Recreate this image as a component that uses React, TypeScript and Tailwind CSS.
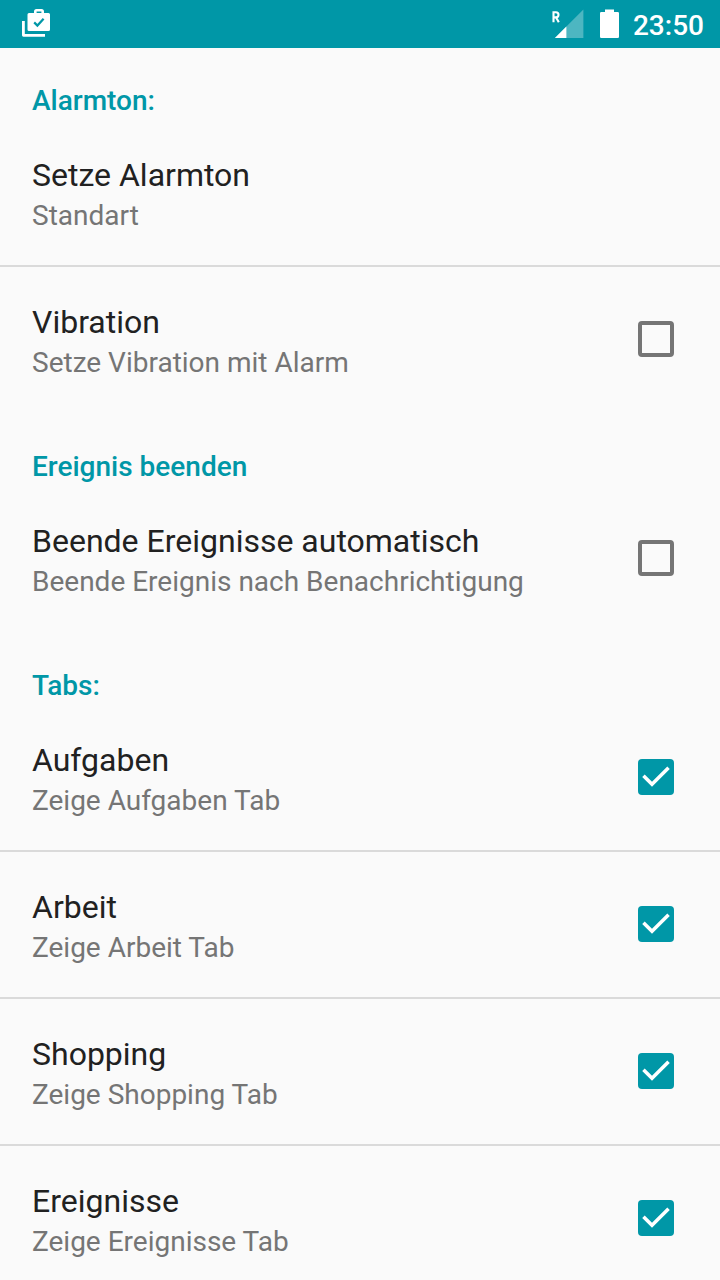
import { useState } from "react"

interface Preference {
  title: string
  summary: string
  checked?: boolean
}

interface Section {
  header: string
  items: Preference[]
}

const SECTIONS: Section[] = [
  {
    header: "Alarmton:",
    items: [
      { title: "Setze Alarmton", summary: "Standart" },
      { title: "Vibration", summary: "Setze Vibration mit Alarm", checked: false },
    ],
  },
  {
    header: "Ereignis beenden",
    items: [
      {
        title: "Beende Ereignisse automatisch",
        summary: "Beende Ereignis nach Benachrichtigung",
        checked: false,
      },
    ],
  },
  {
    header: "Tabs:",
    items: [
      { title: "Aufgaben", summary: "Zeige Aufgaben Tab", checked: true },
      { title: "Arbeit", summary: "Zeige Arbeit Tab", checked: true },
      { title: "Shopping", summary: "Zeige Shopping Tab", checked: true },
      { title: "Ereignisse", summary: "Zeige Ereignisse Tab", checked: true },
    ],
  },
]

function StatusBar() {
  return (
    <header className="flex h-12 shrink-0 items-center justify-between bg-[#0097a7] pl-5 pr-4 text-white">
      {/* briefcase with check mark, stacked on a second sheet */}
      <svg width="32" height="48" viewBox="0 0 32 48" fill="none">
        <path d="M3.4 21v14.3H25" stroke="currentColor" strokeWidth="2.8" strokeLinejoin="round" />
        <path
          fillRule="evenodd"
          fill="currentColor"
          d="M14 13v-1.5a2.5 2.5 0 0 1 2.5-2.5h5a2.5 2.5 0 0 1 2.5 2.5V13h4.5a1.5 1.5 0 0 1 1.5 1.500v15a1.500 1.500 0 0 1-1.500 1.500H9a1.500 1.500 0 0 1-1.500-1.500v-15A1.500 1.500 0 0 1 9 13ZM16.600 13h4.800v-1.600h-4.800Z"
        />
        <path d="m14.200 22.400 3.200 3.200 6.200-6.800" stroke="#0097a7" strokeWidth="2.200" />
      </svg>
      <div className="flex items-center">
        <svg width="36" height="48" viewBox="0 0 36 48">
          <path d="M31.400 9.500V38H2.900Z" fill="currentColor" fillOpacity="0.3" />
          <path d="M14.400 26.500v11.500H2.900Z" fill="currentColor" />
          <path
            d="M1.500 22.200v-10h2.400a2.600 2.600 0 0 1 0 5.200H1.500M4.100 17.400l2.700 4.800"
            fill="none"
            stroke="currentColor"
            strokeWidth="2.100"
          />
        </svg>
        <svg width="19" height="48" viewBox="0 0 19 48" className="ml-3" fill="currentColor">
          <path d="M5 9.500h9V12h3.700a1.300 1.300 0 0 1 1.300 1.300v23.400a1.300 1.300 0 0 1-1.300 1.300H1.300A1.300 1.300 0 0 1 0 36.700V13.300A1.300 1.300 0 0 1 1.300 12H5Z" />
        </svg>
        <span className="ml-3.5 mt-1 text-[28px] leading-8 font-medium">23:50</span>
      </div>
    </header>
  )
}

function Checkbox({ checked }: { checked: boolean }) {
  return (
    <svg width="36" height="36" viewBox="0 0 36 36" fill="none" className="mr-3.5 shrink-0">
      {checked ? (
        <>
          <rect width="36" height="36" rx="4" fill="#0097a7" />
          <path d="M14 27.700 4.200 17.900l2.500-2.500 7.300 7.300L29.300 7.400l2.500 2.500Z" fill="white" />
        </>
      ) : (
        <rect x="2" y="2" width="32" height="32" rx="2" stroke="#757575" strokeWidth="4" />
      )}
    </svg>
  )
}

function PreferenceRow({ item }: { item: Preference }) {
  const [checked, setChecked] = useState(item.checked ?? false)
  const hasCheckbox = item.checked !== undefined

  return (
    <button
      type="button"
      role={hasCheckbox ? "checkbox" : undefined}
      aria-checked={hasCheckbox ? checked : undefined}
      onClick={() => setChecked(!checked)}
      className="flex h-[145px] w-full items-center justify-between px-8 pb-px text-left"
    >
      <div className="mt-1 flex flex-col">
        <span className="text-[32px] leading-[38px] text-[#212121]">{item.title}</span>
        <span className="mt-[5px] text-[28px] leading-[33px] text-[#757575]">{item.summary}</span>
      </div>
      {hasCheckbox && <Checkbox checked={checked} />}
    </button>
  )
}

export default function App() {
  return (
    <div className="flex h-[1280px] w-[720px] flex-col overflow-hidden bg-[#fafafa] font-['Roboto',sans-serif]">
      <StatusBar />
      <main className="min-h-0 flex-1 overflow-hidden">
        {SECTIONS.map((section) => (
          <section key={section.header} className="pt-[38px] first:pt-9">
            <h2 className="mb-[3px] h-[33px] px-8 text-[28px] leading-[33px] font-medium text-[#0097a7]">
              {section.header}
            </h2>
            <ul className="divide-y-2 divide-[#dadada]">
              {section.items.map((item) => (
                <li key={item.title}>
                  <PreferenceRow item={item} />
                </li>
              ))}
            </ul>
          </section>
        ))}
      </main>
    </div>
  )
}
